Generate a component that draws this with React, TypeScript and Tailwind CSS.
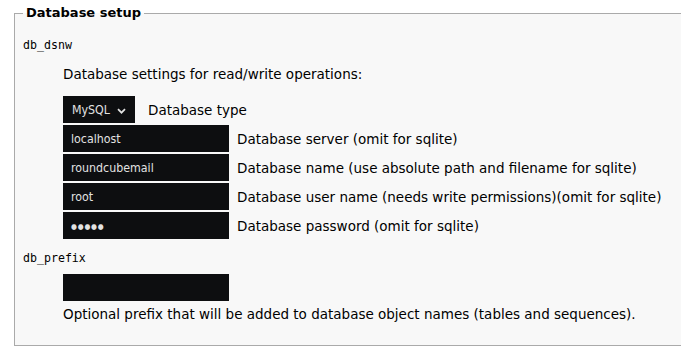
import React from 'react';

const SANS = "font-['DejaVu_Sans',sans-serif]";
const INPUT_FONT = "font-['DejaVu_Sans_Condensed','DejaVu_Sans',sans-serif] [font-stretch:condensed]";

interface Field {
  value: string;
  label: string;
  secret?: boolean;
}

const FIELDS: Field[] = [
  { value: 'localhost', label: 'Database server (omit for sqlite)' },
  { value: 'roundcubemail', label: 'Database name (use absolute path and filename for sqlite)' },
  { value: 'root', label: 'Database user name (needs write permissions)(omit for sqlite)' },
  { value: '●●●●●', label: 'Database password (omit for sqlite)', secret: true },
];

const App: React.FC = () => {
  return (
    <div className={`w-[681px] h-[362px] overflow-hidden bg-white text-black text-[13.5px] ${SANS}`}>
      <fieldset className="mt-[5px] ml-[14px] w-[700px] border border-[#aaaaaa] bg-[#f8f8f8] pb-[23px]">
        <legend className="ml-[8px] px-[3px] font-bold text-[13px] leading-[16px]">Database setup</legend>

        {/* db_dsnw */}
        <div className="mt-[16px] ml-[8px] font-['DejaVu_Sans_Mono',monospace] text-[11.6px] leading-[16px]">db_dsnw</div>
        <div className="ml-[48px]">
          <p className="mt-[13px] leading-[16px]">Database settings for read/write operations:</p>

          <div className="mt-[14px] flex items-center gap-[13px]">
            <div className={`flex h-[27px] w-[72px] items-center gap-[7px] bg-[#0d0e10] pl-[9px] pt-[1px] text-[12.3px] text-[#e2e2e2] ${INPUT_FONT}`}>
              <span>MySQL</span>
              <svg width="9" height="6" viewBox="0 0 9 6" className="mt-[1px]">
                <path d="M1 1.2l3.5 3.5 3.5-3.5" fill="none" stroke="#e2e2e2" strokeWidth="1.7" />
              </svg>
            </div>
            <span className="leading-[16px]">Database type</span>
          </div>

          <div className="mt-[2px] flex flex-col gap-[2px]">
            {FIELDS.map((f) => (
              <div key={f.label} className="flex items-center gap-[8px]">
                <div className={`flex h-[27px] w-[166px] items-center bg-[#0d0e10] pl-[8px] pt-[2px] text-[12.3px] text-[#e2e2e2] ${INPUT_FONT}`}>
                  {f.secret ? (
                    <span className="text-[7.5px] tracking-[0.8px]">{f.value}</span>
                  ) : (
                    f.value
                  )}
                </div>
                <span className="leading-[16px] pt-[1px]">{f.label}</span>
              </div>
            ))}
          </div>
        </div>

        {/* db_prefix */}
        <div className="mt-[11px] ml-[8px] font-['DejaVu_Sans_Mono',monospace] text-[11.6px] leading-[16px]">db_prefix</div>
        <div className="ml-[48px]">
          <div className="mt-[8px] h-[27px] w-[166px] bg-[#0d0e10]" />
          <p className="mt-[5px] leading-[16px]">Optional prefix that will be added to database object names (tables and sequences).</p>
        </div>
      </fieldset>
    </div>
  );
};

export default App;
